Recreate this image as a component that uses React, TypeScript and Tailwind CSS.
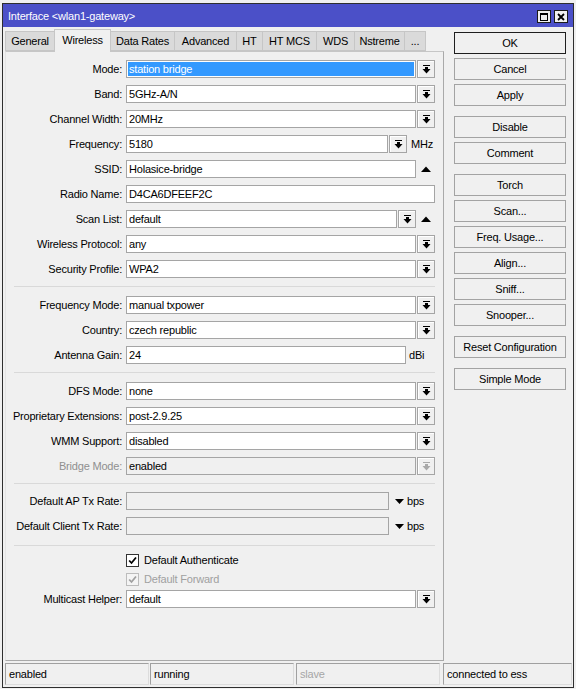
import React from "react";

const FONT = { fontFamily: '"Liberation Sans", Arial, sans-serif' };

function DropIcon({ disabled }: { disabled?: boolean }) {
  const c = disabled ? "#a8a8a8" : "#000";
  return (
    <svg width="9" height="9" viewBox="0 0 9 9">
      <rect x="1" y="0" width="7" height="1" fill={c} />
      <rect x="3" y="2" width="3" height="2" fill={c} />
      <polygon points="0.5,4 8.5,4 4.5,8.5" fill={c} />
    </svg>
  );
}

function DropBtn({ disabled }: { disabled?: boolean }) {
  return (
    <div className="ml-[1px] w-[18px] h-[18px] shrink-0 border border-[#a5a5a5] bg-[#f0f0f0] shadow-[inset_1px_1px_0_#ffffff] flex items-center justify-center">
      <DropIcon disabled={disabled} />
    </div>
  );
}

function UpArrow() {
  return (
    <div className="w-[19px] h-[18px] shrink-0 flex items-center justify-center pl-[1px]">
      <svg width="10" height="6" viewBox="0 0 10 6">
        <polygon points="0,6 10,6 5,0.5" fill="#000" />
      </svg>
    </div>
  );
}

function Input({
  value,
  selected,
  gray,
}: {
  value?: string;
  selected?: boolean;
  gray?: boolean;
}) {
  if (selected) {
    return (
      <div className="flex-1 min-w-0 h-[18px] border border-[#a5a5a5] bg-white p-[1px]">
        <div className="w-full h-full bg-[#3399ff] text-white flex items-center pl-[1px] whitespace-nowrap">
          {value}
        </div>
      </div>
    );
  }
  return (
    <div
      className={`flex-1 min-w-0 h-[18px] border border-[#a5a5a5] flex items-center pl-[2px] whitespace-nowrap text-black ${
        gray ? "bg-[#f0f0f0]" : "bg-white"
      }`}
    >
      {value}
    </div>
  );
}

function Row({
  label,
  gray,
  children,
}: {
  label: string;
  gray?: boolean;
  children: React.ReactNode;
}) {
  return (
    <div className="flex items-center h-[18px]">
      <div
        className={`w-[116px] text-right whitespace-nowrap ${
          gray ? "text-[#8f8f8f]" : "text-black"
        }`}
      >
        {label}
      </div>
      <div className="ml-[4px] w-[309px] h-[18px] flex items-center">
        {children}
      </div>
    </div>
  );
}

function Sep({ top }: { top: string }) {
  return <div className={`${top} ml-[8px] w-[421px] h-px bg-[#d9d9d9]`} />;
}

function Check({ disabled }: { disabled?: boolean }) {
  const c = disabled ? "#a0a0a0" : "#000";
  return (
    <div
      className={`w-[13px] h-[13px] shrink-0 border flex items-center justify-center ${
        disabled ? "border-[#bcbcbc] bg-[#f4f4f4]" : "border-[#333333] bg-white"
      }`}
    >
      <svg width="9" height="9" viewBox="0 0 9 9">
        <polyline
          points="1.2,4.5 3.5,7 8,1.5"
          fill="none"
          stroke={c}
          strokeWidth="1.8"
        />
      </svg>
    </div>
  );
}

function Btn({
  children,
  mt,
  def,
}: {
  children: React.ReactNode;
  mt?: string;
  def?: boolean;
}) {
  return (
    <div
      className={`${mt ?? ""} h-[22px] w-[112px] flex items-center justify-center pt-px bg-[#f0f0f0] border ${
        def ? "border-[#1e1e1e]" : "border-[#a3a3a3]"
      } text-black whitespace-nowrap`}
    >
      {children}
    </div>
  );
}

function Tab({
  label,
  w,
  active,
}: {
  label: string;
  w: string;
  active?: boolean;
}) {
  if (active) {
    return (
      <div
        className={`${w} h-[23px] -ml-px relative z-10 mb-[-1px] bg-[#f0f0f0] border border-b-0 border-[#c6c6c6] flex items-start justify-center pt-[5px] text-black`}
      >
        {label}
      </div>
    );
  }
  return (
    <div
      className={`${w} h-[20px] -ml-px bg-[#dadada] border border-[#c6c6c6] flex items-center justify-center pt-px text-black`}
    >
      {label}
    </div>
  );
}

function Status({
  children,
  w,
  ml,
  gray,
}: {
  children: React.ReactNode;
  w: string;
  ml: string;
  gray?: boolean;
}) {
  return (
    <div
      className={`${w} ${ml} h-[22px] border border-t-[#a0a0a0] border-l-[#a0a0a0] border-r-[#dcdcdc] border-b-[#dcdcdc] flex items-center pl-[3px] whitespace-nowrap ${
        gray ? "text-[#a6a6a6]" : "text-black"
      }`}
    >
      {children}
    </div>
  );
}

export default function App() {
  return (
    <div
      className="w-[576px] h-[689px] bg-[#f0f0f0] pt-[3px] pl-[2px] overflow-hidden text-[11px] tracking-[-0.2px] leading-none"
      style={FONT}
    >
      <div className="w-[572px] h-[685px] border border-[#2e2e2e] bg-[#f0f0f0] flex flex-col">
        {/* Title bar */}
        <div className="h-[23px] bg-[#4b50c8] flex items-center pl-[5px] pr-[5px] shrink-0">
          <span className="text-white text-[11px] mt-[1px]">
            Interface &lt;wlan1-gateway&gt;
          </span>
          <div className="ml-auto flex items-center gap-[3px] mt-[2px]">
            <div className="w-[14px] h-[13px] bg-[#f0f0f0] border border-[#1a1a1a] flex items-center justify-center">
              <div className="w-[8px] h-[8px] border border-[#000] border-t-2" />
            </div>
            <div className="w-[14px] h-[13px] bg-[#f0f0f0] border border-[#1a1a1a] flex items-center justify-center">
              <svg width="8" height="8" viewBox="0 0 8 8">
                <path d="M1 1 L7 7 M7 1 L1 7" stroke="#000" strokeWidth="1.8" />
              </svg>
            </div>
          </div>
        </div>

        {/* Body */}
        <div className="flex flex-1">
          <div className="pl-[2px] flex flex-col">
            <div className="h-[24px] flex items-end pl-px">
              <Tab label="General" w="w-[50px]" />
              <Tab label="Wireless" w="w-[57px]" active />
              <Tab label="Data Rates" w="w-[65px]" />
              <Tab label="Advanced" w="w-[63px]" />
              <Tab label="HT" w="w-[27px]" />
              <Tab label="HT MCS" w="w-[55px]" />
              <Tab label="WDS" w="w-[39px]" />
              <Tab label="Nstreme" w="w-[51px]" />
              <Tab label="..." w="w-[22px]" />
            </div>
            <div className="w-[439px] h-[610px] border border-t-[#c6c6c6] border-l-[#e4e4e4] border-r-[#a9a9a9] border-b-[#a9a9a9] bg-[#f0f0f0] pt-[8px] flex flex-col">
              <div className="flex flex-col gap-[7px]">
                <Row label="Mode:">
                  <Input value="station bridge" selected />
                  <DropBtn />
                </Row>
                <Row label="Band:">
                  <Input value="5GHz-A/N" />
                  <DropBtn />
                </Row>
                <Row label="Channel Width:">
                  <Input value="20MHz" />
                  <DropBtn />
                </Row>
                <Row label="Frequency:">
                  <Input value="5180" />
                  <DropBtn />
                  <div className="w-[28px] shrink-0 pl-[4px] text-black">MHz</div>
                </Row>
                <Row label="SSID:">
                  <Input value="Holasice-bridge" />
                  <UpArrow />
                </Row>
                <Row label="Radio Name:">
                  <Input value="D4CA6DFEEF2C" />
                </Row>
                <Row label="Scan List:">
                  <Input value="default" />
                  <DropBtn />
                  <UpArrow />
                </Row>
                <Row label="Wireless Protocol:">
                  <Input value="any" />
                  <DropBtn />
                </Row>
                <Row label="Security Profile:">
                  <Input value="WPA2" />
                  <DropBtn />
                </Row>
              </div>

              <Sep top="mt-[8px]" />

              <div className="mt-[9px] flex flex-col gap-[7px]">
                <Row label="Frequency Mode:">
                  <Input value="manual txpower" />
                  <DropBtn />
                </Row>
                <Row label="Country:">
                  <Input value="czech republic" />
                  <DropBtn />
                </Row>
                <Row label="Antenna Gain:">
                  <Input value="24" />
                  <div className="w-[29px] shrink-0 pl-[3px] text-black">dBi</div>
                </Row>
              </div>

              <Sep top="mt-[8px]" />

              <div className="mt-[9px] flex flex-col gap-[7px]">
                <Row label="DFS Mode:">
                  <Input value="none" />
                  <DropBtn />
                </Row>
                <Row label="Proprietary Extensions:">
                  <Input value="post-2.9.25" />
                  <DropBtn />
                </Row>
                <Row label="WMM Support:">
                  <Input value="disabled" />
                  <DropBtn />
                </Row>
                <Row label="Bridge Mode:" gray>
                  <Input value="enabled" gray />
                  <DropBtn disabled />
                </Row>
              </div>

              <Sep top="mt-[8px]" />

              <div className="mt-[8px] flex flex-col gap-[7px]">
                <Row label="Default AP Tx Rate:">
                  <Input gray />
                  <div className="w-[46px] shrink-0 flex items-center pl-[6px]">
                    <svg width="9" height="5" viewBox="0 0 9 5">
                      <polygon points="0,0 9,0 4.5,5" fill="#000" />
                    </svg>
                    <span className="ml-[3px] text-black">bps</span>
                  </div>
                </Row>
                <Row label="Default Client Tx Rate:">
                  <Input gray />
                  <div className="w-[46px] shrink-0 flex items-center pl-[6px]">
                    <svg width="9" height="5" viewBox="0 0 9 5">
                      <polygon points="0,0 9,0 4.5,5" fill="#000" />
                    </svg>
                    <span className="ml-[3px] text-black">bps</span>
                  </div>
                </Row>
              </div>

              <Sep top="mt-[10px]" />

              <div className="mt-[6px] h-[16px] flex items-center pl-[120px]">
                <Check />
                <span className="ml-[5px] text-black">Default Authenticate</span>
              </div>
              <div className="mt-[3px] h-[16px] flex items-center pl-[120px]">
                <Check disabled />
                <span className="ml-[5px] text-[#a0a0a0]">Default Forward</span>
              </div>
              <div className="mt-[3px]">
                <Row label="Multicast Helper:">
                  <Input value="default" />
                  <DropBtn />
                </Row>
              </div>
            </div>
          </div>

          <div className="ml-[10px] pt-[5px] flex flex-col">
            <Btn def>OK</Btn>
            <Btn mt="mt-[4px]">Cancel</Btn>
            <Btn mt="mt-[4px]">Apply</Btn>
            <Btn mt="mt-[10px]">Disable</Btn>
            <Btn mt="mt-[4px]">Comment</Btn>
            <Btn mt="mt-[10px]">Torch</Btn>
            <Btn mt="mt-[4px]">Scan...</Btn>
            <Btn mt="mt-[4px]">Freq. Usage...</Btn>
            <Btn mt="mt-[4px]">Align...</Btn>
            <Btn mt="mt-[4px]">Sniff...</Btn>
            <Btn mt="mt-[4px]">Snooper...</Btn>
            <Btn mt="mt-[10px]">Reset Configuration</Btn>
            <Btn mt="mt-[10px]">Simple Mode</Btn>
          </div>
        </div>

        {/* Status bar */}
        <div className="mt-[1px] mb-[2px] pl-[2px] flex shrink-0">
          <Status w="w-[144px]" ml="ml-0">enabled</Status>
          <Status w="w-[144px]" ml="ml-[1px]">running</Status>
          <Status w="w-[144px]" ml="ml-[2px]" gray>
            slave
          </Status>
          <Status w="w-[129px]" ml="ml-[3px]">connected to ess</Status>
        </div>
      </div>
    </div>
  );
}
